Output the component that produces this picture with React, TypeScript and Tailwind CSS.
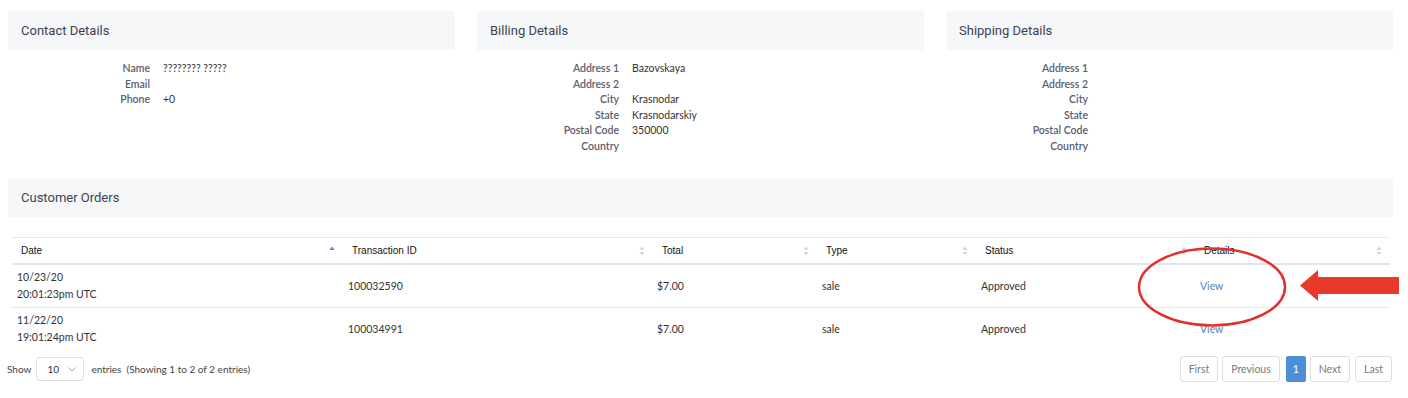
import React from "react";

const body = { fontFamily: "Lato, 'Open Sans', sans-serif" };
const head = { fontFamily: "Roboto, 'Open Sans', sans-serif" };

function SortIcon({ active }: { active?: boolean }) {
  return (
    <svg width="6" height="10" viewBox="0 0 6 10" className="shrink-0">
      <path d="M3 0.5 L5.6 4 L0.4 4 Z" fill={active ? "#7377d6" : "#d3d5da"} />
      {!active && <path d="M3 9.5 L5.6 6 L0.4 6 Z" fill="#d3d5da" />}
    </svg>
  );
}

function Card({ title, rows }: { title: string; rows: [string, string][] }) {
  return (
    <div className="w-[447px]">
      <div className="h-[39px] bg-[#f6f7f9] flex items-center pl-[13px] text-[13px] text-[#3d4152]" style={head}>
        {title}
      </div>
      <div className="mt-[11px]">
        {rows.map(([l, v]) => (
          <div key={l} className="flex h-[15.6px] items-center text-[10.5px]">
            <div className="w-[142px] text-right font-semibold text-[#5a5d6c]">{l}</div>
            <div className="pl-[13px] text-[#333]">{v}</div>
          </div>
        ))}
      </div>
    </div>
  );
}

const cols = [
  { name: "Date", w: 331, active: true },
  { name: "Transaction ID", w: 310 },
  { name: "Total", w: 164 },
  { name: "Type", w: 159 },
  { name: "Status", w: 219 },
  { name: "Details", w: 195 },
];

const orders = [
  { d1: "10/23/20", d2: "20:01:23pm UTC", id: "100032590" },
  { d1: "11/22/20", d2: "19:01:24pm UTC", id: "100034991" },
];

function PageBtn({ children }: { children: React.ReactNode }) {
  return (
    <div className="h-[26px] px-[8px] border border-[#dcdfe5] rounded-[3px] flex items-center">{children}</div>
  );
}

export default function App() {
  return (
    <div className="relative w-[1408px] h-[398px] bg-white overflow-hidden" style={body}>
      <div className="pt-[11px] pl-[8px] w-[1393px]">
        <div className="flex gap-[22px]">
          <Card title="Contact Details" rows={[["Name", "???????? ?????"], ["Email", ""], ["Phone", "+0"]]} />
          <Card
            title="Billing Details"
            rows={[
              ["Address 1", "Bazovskaya"],
              ["Address 2", ""],
              ["City", "Krasnodar"],
              ["State", "Krasnodarskiy"],
              ["Postal Code", "350000"],
              ["Country", ""],
            ]}
          />
          <Card
            title="Shipping Details"
            rows={[
              ["Address 1", ""],
              ["Address 2", ""],
              ["City", ""],
              ["State", ""],
              ["Postal Code", ""],
              ["Country", ""],
            ]}
          />
        </div>

        <div className="mt-[23.4px] h-[39px] w-[1385px] bg-[#f6f7f9] flex items-center pl-[13px] text-[13px] text-[#3d4152]" style={head}>
          Customer Orders
        </div>

        <div className="mt-[20px] ml-[4px]">
          <table className="table-fixed border-collapse w-[1378px]">
            <colgroup>
              {cols.map((c) => (
                <col key={c.name} style={{ width: c.w }} />
              ))}
            </colgroup>
            <thead>
              <tr className="border-t border-[#e6e8ee] border-b-2 border-b-[#e2e5ec]">
                {cols.map((c) => (
                  <th key={c.name} className="h-[27px] p-0 font-normal text-left">
                    <div className="flex items-center justify-between pl-[9px] pr-[8px] text-[10px] text-[#111]" style={{ fontFamily: "'Liberation Sans', Arial, sans-serif" }}>
                      <span>{c.name}</span>
                      <SortIcon active={c.active} />
                    </div>
                  </th>
                ))}
              </tr>
            </thead>
            <tbody className="text-[10.5px] text-[#333]">
              {orders.map((o, i) => (
                <tr key={o.id} className={i === 0 ? "border-b border-[#e6e8ee]" : ""}>
                  <td className="pl-[5px] py-[4px] leading-[17px]">
                    <div>{o.d1}</div>
                    <div>{o.d2}</div>
                  </td>
                  <td className="pl-[5px]">{o.id}</td>
                  <td className="pl-[4px]">$7.00</td>
                  <td className="pl-[5px]">sale</td>
                  <td className="pl-[5px]">Approved</td>
                  <td className="pl-[5px] text-[#4a86c8]">View</td>
                </tr>
              ))}
            </tbody>
          </table>
        </div>

        <div className="mt-[6px] flex items-center justify-between w-[1385px] -ml-[1px]">
          <div className="flex items-center text-[10px] text-[#444]">
            <span>Show</span>
            <div className="ml-[5px] w-[48px] h-[24px] border border-[#dcdfe5] rounded-[3px] flex items-center justify-between pl-[10px] pr-[7px] text-[#333]">
              <span>10</span>
              <svg width="8" height="5" viewBox="0 0 8 5">
                <path d="M0.5 0.5 L4 4 L7.5 0.5" stroke="#9aa0ab" strokeWidth="1" fill="none" />
              </svg>
            </div>
            <span className="ml-[7px]">entries&nbsp; (Showing 1 to 2 of 2 entries)</span>
          </div>
          <div className="flex items-center gap-[4px] text-[10.5px] text-[#777a80]">
            <PageBtn>First</PageBtn>
            <PageBtn>Previous</PageBtn>
            <div className="h-[26px] w-[20px] ml-[2px] bg-[#4b90d6] text-white rounded-[2px] flex items-center justify-center">1</div>
            <PageBtn>Next</PageBtn>
            <div className="ml-[1px] h-[26px] px-[8px] border border-[#dcdfe5] rounded-[3px] flex items-center">Last</div>
          </div>
        </div>
      </div>

      <svg className="absolute left-0 top-0 pointer-events-none" width="1408" height="398" viewBox="0 0 1408 398">
        <ellipse cx="1212" cy="287" rx="73" ry="38.5" fill="none" stroke="#e2302a" strokeWidth="2.5" />
        <path d="M1300 285.5 L1318 270 L1318 277 L1399 277 L1399 294 L1318 294 L1318 301 Z" fill="#e8392b" />
      </svg>
    </div>
  );
}
